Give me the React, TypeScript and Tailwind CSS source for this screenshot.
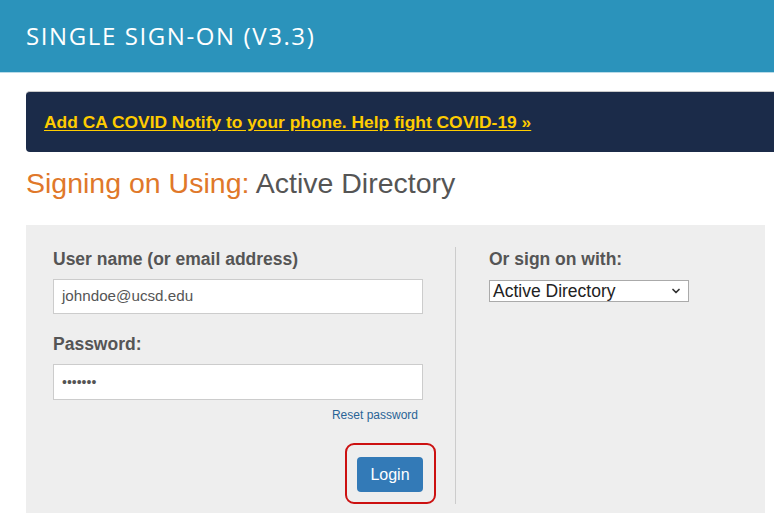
import { ChevronDown } from 'lucide-react';

const App = () => {
  return (
    <div className="min-h-[513px] w-[774px] overflow-hidden bg-white font-['Liberation_Sans',Arial,sans-serif]">
      {/* Header */}
      <header className="flex h-[73px] items-center border-b border-[#b9dbe8] bg-[#2b93bb] pl-[26px]">
        <h1 className="font-['Open_Sans','DejaVu_Sans',sans-serif] text-[24px] tracking-[1.6px] text-white">
          SINGLE SIGN-ON (V3.3)
        </h1>
      </header>

      <div className="pl-[26px]">
        {/* Covid banner */}
        <div className="mt-[18px] flex h-[61px] items-center rounded-l-[4px] border-t border-[#c9c9c9] bg-[#1b2b49] pl-[18px]">
          <a href="#" className="text-[17.4px] font-bold text-[#ffcc00] underline underline-offset-2">
            Add CA COVID Notify to your phone. Help fight COVID-19 »
          </a>
        </div>

        {/* Signing on */}
        <h2 className="mt-[14px] text-[28.5px] leading-[34px]">
          <span className="text-[#e0782a]">Signing on Using: </span>
          <span className="text-[#555555]">Active Directory</span>
        </h2>

        {/* Panel */}
        <div className="mt-[25px] flex h-[300px] w-[739px] items-start bg-[#eeeeee] pt-[22px]">
          {/* Left column */}
          <div className="w-[430px] border-r border-[#cccccc] pl-[27px] pt-[2px]">
            <label className="block text-[17.5px] font-bold leading-[20px] text-[#555555]">
              User name (or email address)
            </label>
            <div className="mt-[10px] flex h-[35px] w-[370px] items-center border border-[#cccccc] bg-white px-[8px] text-[15.2px] text-[#555555]">
              johndoe@ucsd.edu
            </div>
            <label className="mt-[20px] block text-[17.5px] font-bold leading-[20px] text-[#555555]">
              Password:
            </label>
            <div className="mt-[10px] flex h-[36px] w-[370px] items-center border border-[#cccccc] bg-white px-[8px] text-[14px] tracking-[0px] text-[#555555]">
              •••••••
            </div>
            <div className="mt-[8px] flex w-[365px] justify-end">
              <a href="#" className="text-[12px] leading-[14px] text-[#2a6496]">
                Reset password
              </a>
            </div>
            <div className="mt-[21px] flex w-[383px] justify-end">
              <div className="rounded-[9px] border-2 border-[#cc1111] pb-[10px] pl-[10px] pr-[11px] pt-[12px]">
                <button className="h-[35px] w-[66px] rounded-[4px] bg-[#337ab7] text-[16px] text-white">
                  Login
                </button>
              </div>
            </div>
          </div>

          {/* Right column */}
          <div className="pl-[33px] pt-[2px]">
            <label className="block text-[17.5px] font-bold leading-[20px] text-[#555555]">
              Or sign on with:
            </label>
            <div className="mt-[11px] flex h-[22px] w-[200px] items-center justify-between border border-[#aaaaaa] bg-white pl-[3px] pr-[6px] text-[17.5px] text-[#222222]">
              <span>Active Directory</span>
              <ChevronDown size={12} strokeWidth={3.5} className="text-[#333333]" />
            </div>
          </div>
        </div>
      </div>
    </div>
  );
};

export default App;
